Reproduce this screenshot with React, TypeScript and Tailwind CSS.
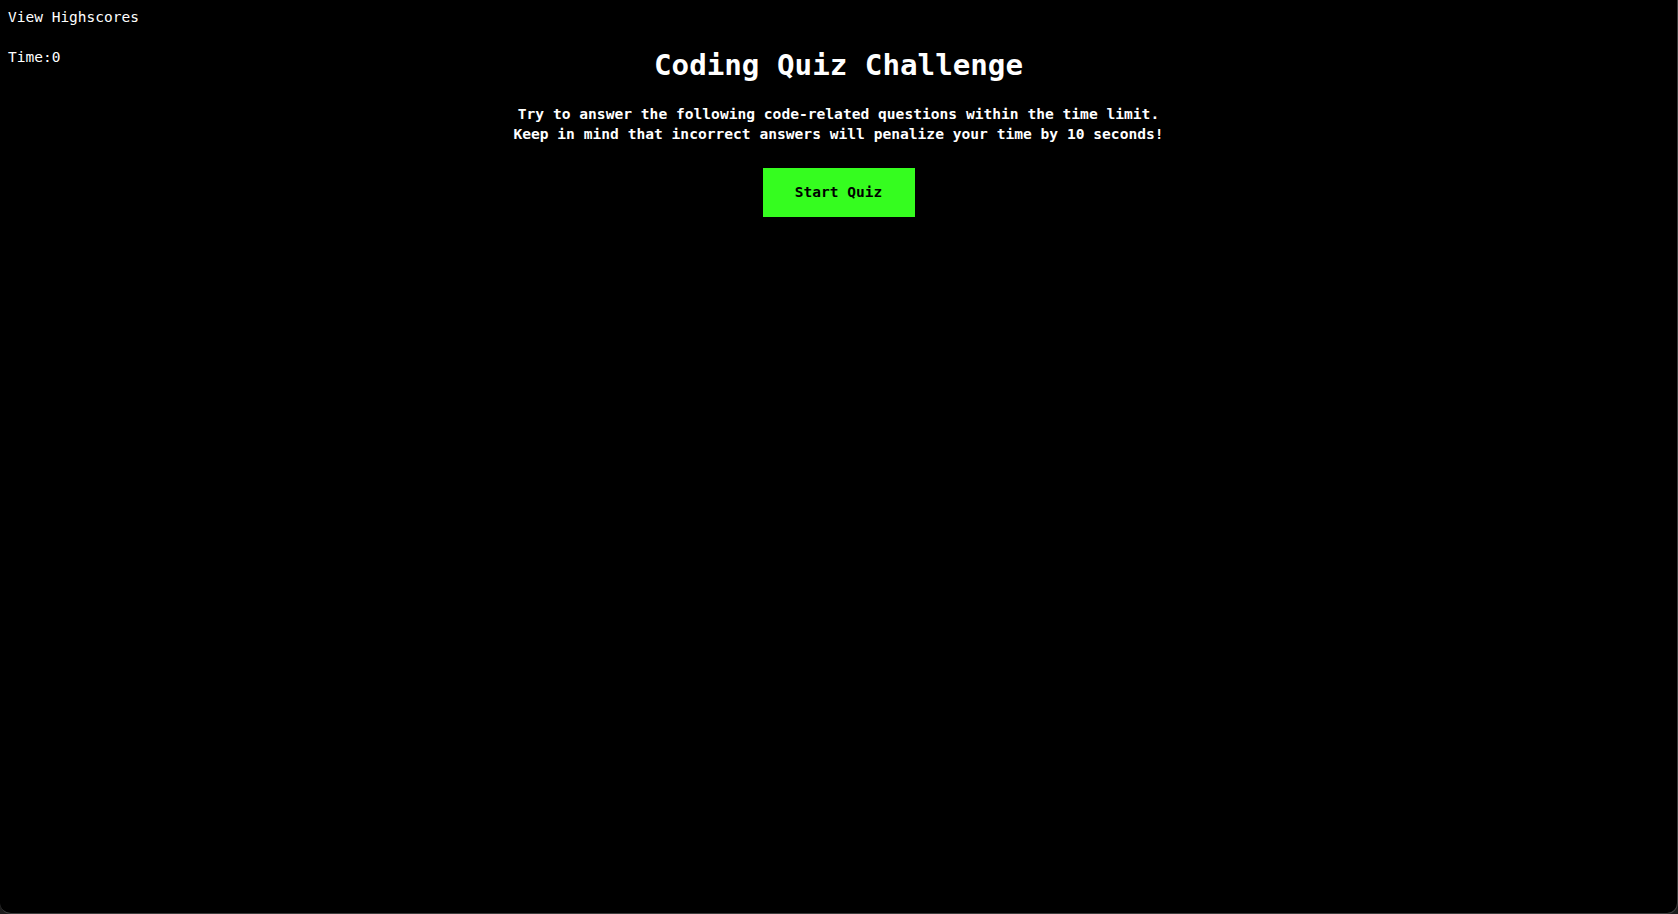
import React from "react";

const mono = "font-['DejaVu_Sans_Mono','Liberation_Mono',monospace]";

const App = () => {
  return (
    <div className="bg-[#1c1c1c]">
      <div
        className={`h-[914px] bg-black text-white ${mono} border-r border-b border-[#3d3d3d] rounded-b-[11px] overflow-hidden`}
      >
        {/* Header */}
        <div className="px-2 pt-2 text-[14.5px] leading-[19px]">View Highscores</div>

        <div className="grid grid-cols-[1fr_auto_1fr] mt-[19px]">
          <div className="px-2 pt-[2px] text-[14.5px] leading-[19px]">Time:0</div>
          <h1 className="text-[29.2px] leading-[38px] font-bold text-center">
            Coding Quiz Challenge
          </h1>
          <div />
        </div>

        {/* Intro */}
        <div className="flex flex-col items-center">
          <p className="mt-[20px] text-[14.6px] leading-[19.5px] font-bold text-center">
            Try to answer the following code-related questions within the time limit.
            <br />
            Keep in mind that incorrect answers will penalize your time by 10 seconds!
          </p>
          <button className="mt-[25px] w-[152px] h-[49px] bg-[#35fd1f] text-black font-bold text-[14.5px]">
            Start Quiz
          </button>
        </div>
      </div>
    </div>
  );
};

export default App;
